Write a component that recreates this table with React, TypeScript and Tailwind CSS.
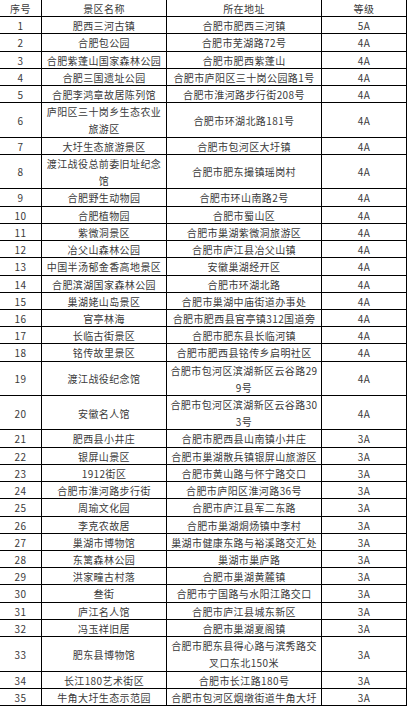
type Row = { no: string; name: string[]; addr: string[]; level: string };

const rows: Row[] = [
  { no: '1', name: ['肥西三河古镇'], addr: ['合肥市肥西三河镇'], level: '5A' },
  { no: '2', name: ['合肥包公园'], addr: ['合肥市芜湖路72号'], level: '4A' },
  { no: '3', name: ['合肥紫蓬山国家森林公园'], addr: ['合肥市肥西紫蓬山'], level: '4A' },
  { no: '4', name: ['合肥三国遗址公园'], addr: ['合肥市庐阳区三十岗公园路1号'], level: '4A' },
  { no: '5', name: ['合肥李鸿章故居陈列馆'], addr: ['合肥市淮河路步行街208号'], level: '4A' },
  { no: '6', name: ['庐阳区三十岗乡生态农业', '旅游区'], addr: ['合肥市环湖北路181号'], level: '4A' },
  { no: '7', name: ['大圩生态旅游景区'], addr: ['合肥市包河区大圩镇'], level: '4A' },
  { no: '8', name: ['渡江战役总前委旧址纪念', '馆'], addr: ['合肥市肥东撮镇瑶岗村'], level: '4A' },
  { no: '9', name: ['合肥野生动物园'], addr: ['合肥市环山南路2号'], level: '4A' },
  { no: '10', name: ['合肥植物园'], addr: ['合肥市蜀山区'], level: '4A' },
  { no: '11', name: ['紫微洞景区'], addr: ['合肥市巢湖紫微洞旅游区'], level: '4A' },
  { no: '12', name: ['冶父山森林公园'], addr: ['合肥市庐江县冶父山镇'], level: '4A' },
  { no: '13', name: ['中国半汤郁金香高地景区'], addr: ['安徽巢湖经开区'], level: '4A' },
  { no: '14', name: ['合肥滨湖国家森林公园'], addr: ['合肥市环湖北路'], level: '4A' },
  { no: '15', name: ['巢湖姥山岛景区'], addr: ['合肥市巢湖中庙街道办事处'], level: '4A' },
  { no: '16', name: ['官亭林海'], addr: ['合肥市肥西县官亭镇312国道旁'], level: '4A' },
  { no: '17', name: ['长临古街景区'], addr: ['合肥市肥东县长临河镇'], level: '4A' },
  { no: '18', name: ['铭传故里景区'], addr: ['合肥市肥西县铭传乡启明社区'], level: '4A' },
  { no: '19', name: ['渡江战役纪念馆'], addr: ['合肥市包河区滨湖新区云谷路29', '9号'], level: '4A' },
  { no: '20', name: ['安徽名人馆'], addr: ['合肥市包河区滨湖新区云谷路30', '3号'], level: '4A' },
  { no: '21', name: ['肥西县小井庄'], addr: ['合肥市肥西县山南镇小井庄'], level: '3A' },
  { no: '22', name: ['银屏山景区'], addr: ['合肥市巢湖散兵镇银屏山旅游区'], level: '3A' },
  { no: '23', name: ['1912街区'], addr: ['合肥市黄山路与怀宁路交口'], level: '3A' },
  { no: '24', name: ['合肥市淮河路步行街'], addr: ['合肥市庐阳区淮河路36号'], level: '3A' },
  { no: '25', name: ['周瑜文化园'], addr: ['合肥市庐江县军二东路'], level: '3A' },
  { no: '26', name: ['李克农故居'], addr: ['合肥市巢湖烔炀镇中李村'], level: '3A' },
  { no: '27', name: ['巢湖市博物馆'], addr: ['巢湖市健康东路与裕溪路交汇处'], level: '3A' },
  { no: '28', name: ['东篱森林公园'], addr: ['　巢湖市巢庐路'], level: '3A' },
  { no: '29', name: ['洪家疃古村落'], addr: ['合肥市巢湖黄麓镇'], level: '3A' },
  { no: '30', name: ['叁街'], addr: ['合肥市宁国路与水阳江路交口'], level: '3A' },
  { no: '31', name: ['庐江名人馆'], addr: ['合肥市庐江县城东新区'], level: '3A' },
  { no: '32', name: ['冯玉祥旧居'], addr: ['合肥市巢湖夏阁镇'], level: '3A' },
  { no: '33', name: ['肥东县博物馆'], addr: ['合肥市肥东县得心路与滨秀路交', '叉口东北150米'], level: '3A' },
  { no: '34', name: ['长江180艺术街区'], addr: ['合肥市长江路180号'], level: '3A' },
  { no: '35', name: ['牛角大圩生态示范园'], addr: ['合肥市包河区烟墩街道牛角大圩'], level: '3A' },
];

function Cell({ lines }: { lines: string[] }) {
  return (
    <div className="flex flex-col items-center justify-center border-r border-black text-center leading-[17px] whitespace-nowrap">
      {lines.map((l, i) => (
        <span key={i}>{l}</span>
      ))}
    </div>
  );
}

export default function App() {
  return (
    <div className="min-h-[713px] w-[409px] bg-white">
      <div className="w-[407px] font-['Noto_Sans_CJK_SC',sans-serif] text-[10px] tracking-[0.4px] text-[#3a3a3a]">
        {/* Header */}
        <div className="grid h-[17.22px] grid-cols-[42px_125px_155px_85px] border-b border-black">
          <Cell lines={['序号']} />
          <Cell lines={['景区名称']} />
          <Cell lines={['所在地址']} />
          <Cell lines={['等级']} />
        </div>

        {rows.map((r) => {
          const tall = r.name.length > 1 || r.addr.length > 1;
          return (
            <div
              key={r.no}
              className={`grid grid-cols-[42px_125px_155px_85px] border-b border-black ${
                tall ? 'h-[34.44px]' : 'h-[17.22px]'
              }`}
            >
              <Cell lines={[r.no]} />
              <Cell lines={r.name} />
              <Cell lines={r.addr} />
              <Cell lines={[r.level]} />
            </div>
          );
        })}
      </div>
    </div>
  );
}
